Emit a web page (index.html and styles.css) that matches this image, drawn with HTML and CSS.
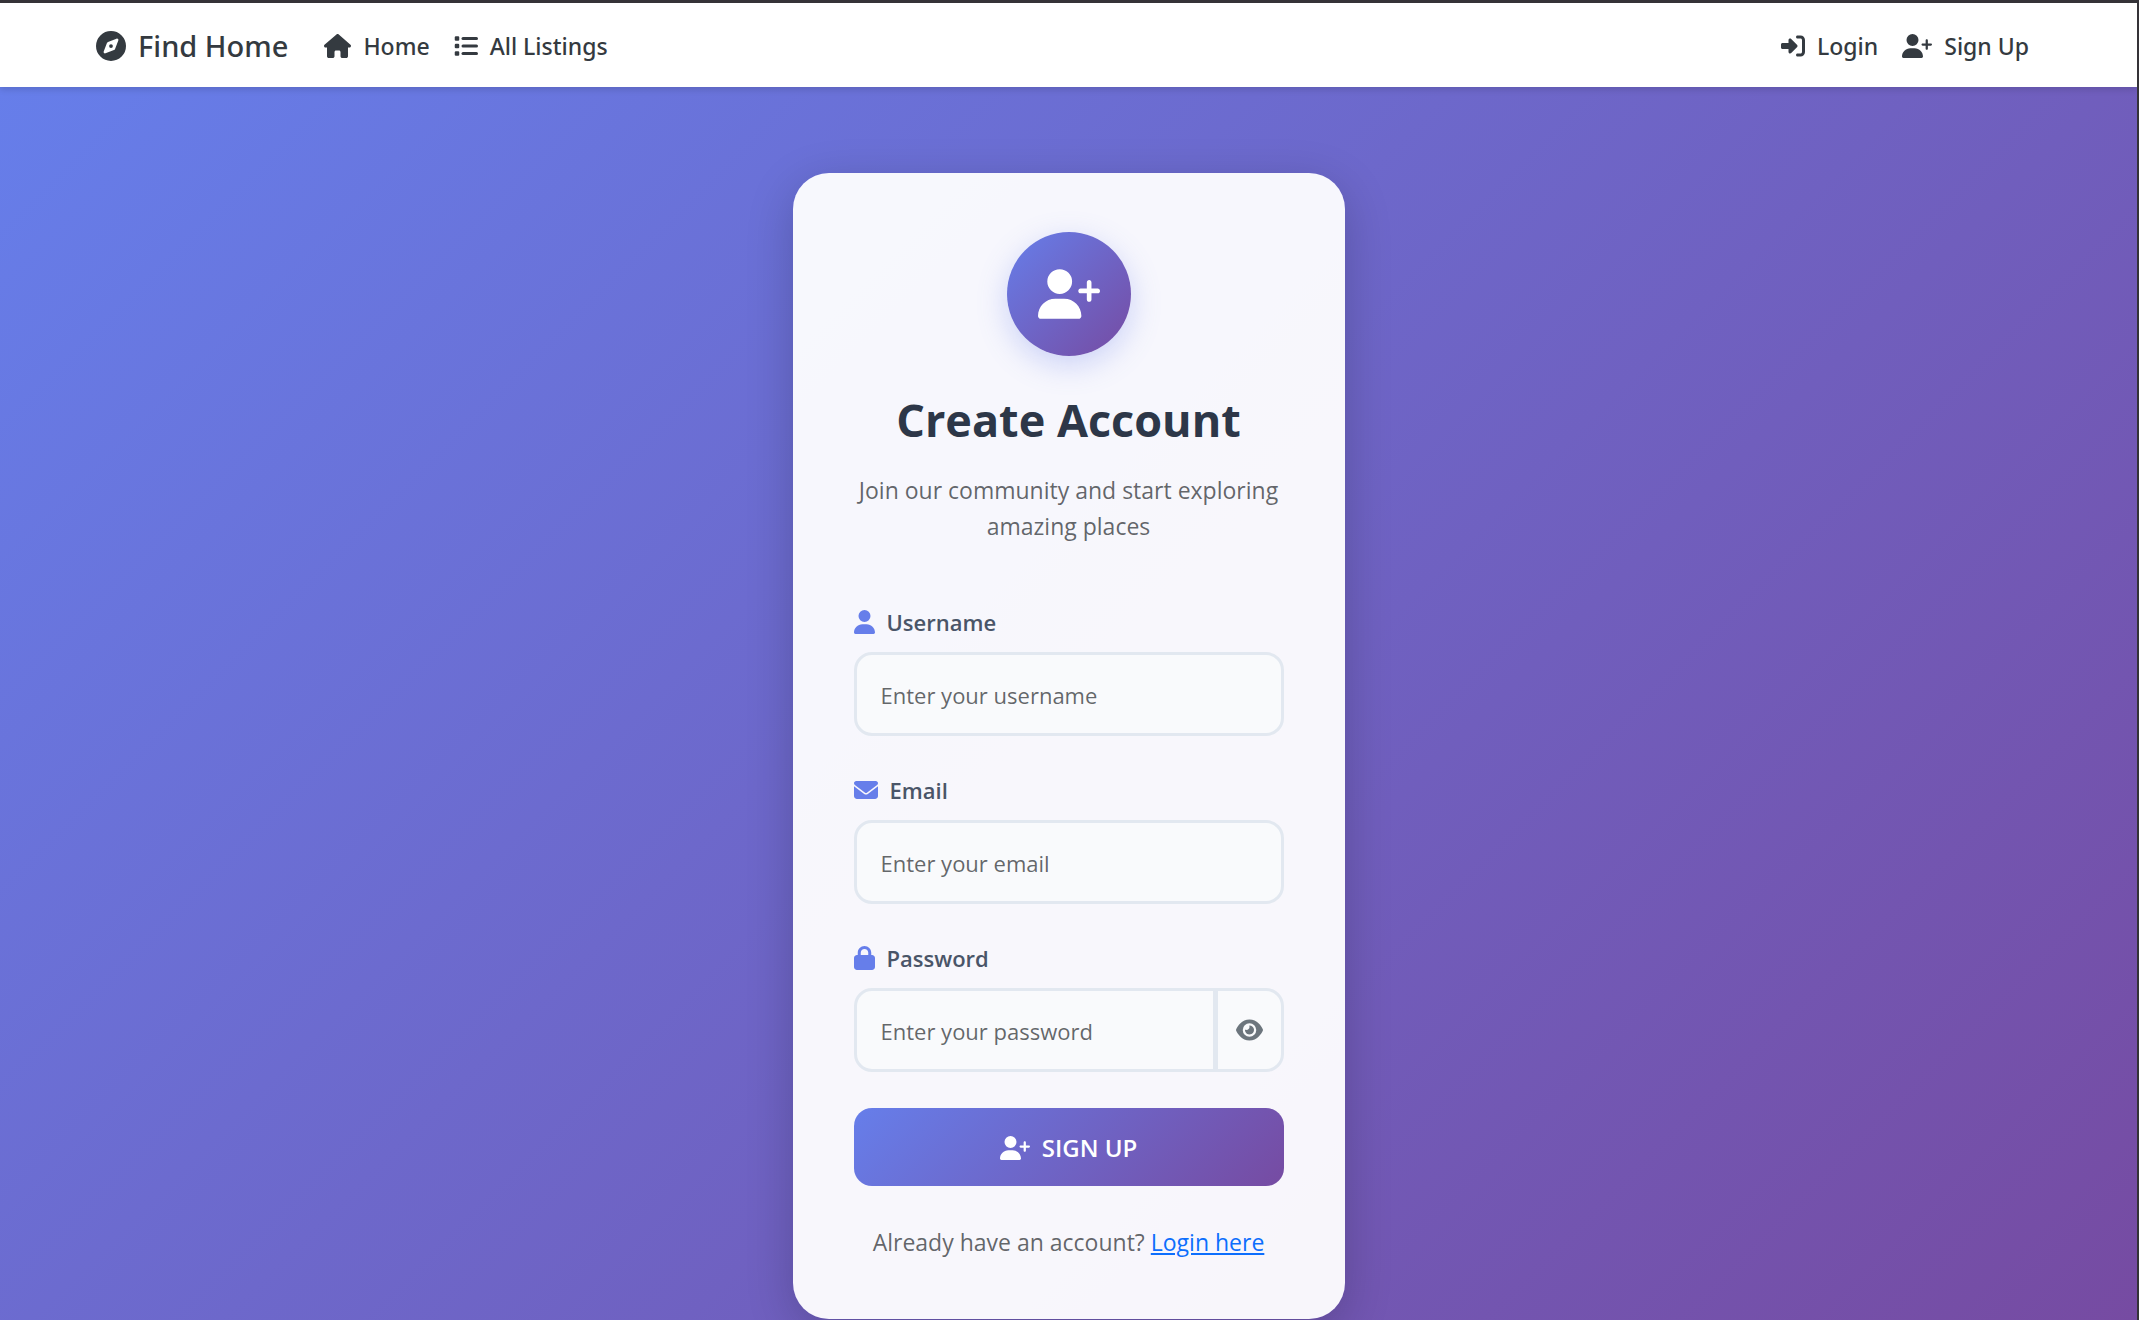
FILE: index.html
```html
<!DOCTYPE html>
<html lang="en">
<head>
<meta charset="utf-8">
<meta name="viewport" content="width=device-width, initial-scale=1">
<title>Sign Up | Find Home</title>
<link rel="stylesheet" href="styles.css">
</head>
<body>
<svg class="sprite" aria-hidden="true">
  <symbol id="i-compass" viewBox="0 0 512 512"><path d="M256 512A256 256 0 1 0 256 0a256 256 0 1 0 0 512zm50.7-186.9L162.4 380.6c-19.4 7.5-38.5-11.6-31-31l55.5-144.3c3.3-8.5 9.9-15.1 18.4-18.4l144.3-55.5c19.4-7.5 38.5 11.6 31 31L325.1 306.7c-3.2 8.5-9.9 15.1-18.4 18.4zM288 256a32 32 0 1 0 -64 0 32 32 0 1 0 64 0z"/></symbol>
  <symbol id="i-house" viewBox="0 0 576 512"><path d="M575.8 255.5c0 18-15 32.1-32 32.1h-32l.7 160.2c0 2.7-.2 5.4-.5 8.1V472c0 22.1-17.9 40-40 40H456c-1.1 0-2.2 0-3.3-.1c-1.4 .1-2.8 .1-4.2 .1H416 392c-22.1 0-40-17.9-40-40V448 384c0-17.7-14.3-32-32-32H256c-17.7 0-32 14.3-32 32v64 24c0 22.1-17.9 40-40 40H160 128.1c-1.5 0-3-.1-4.5-.2c-1.2 .1-2.4 .2-3.6 .2H104c-22.1 0-40-17.9-40-40V360c0-.9 0-1.9 .1-2.8V287.6H32c-18 0-32-14-32-32.1c0-9 3-17 10-24L266.4 8c7-7 15-8 22-8s15 2 21 7L564.8 231.5c8 7 12 15 11 24z"/></symbol>
  <symbol id="i-list" viewBox="0 0 512 512"><rect x="16" y="48" width="96" height="96" rx="24"/><rect x="16" y="208" width="96" height="96" rx="24"/><rect x="16" y="368" width="96" height="96" rx="24"/><rect x="160" y="64" width="352" height="64" rx="32"/><rect x="160" y="224" width="352" height="64" rx="32"/><rect x="160" y="384" width="352" height="64" rx="32"/></symbol>
  <symbol id="i-login" viewBox="0 0 512 512"><path d="M217.9 105.9L340.7 228.7c7.2 7.2 11.3 17.1 11.3 27.3s-4.1 20.1-11.3 27.3L217.9 406.1c-6.4 6.4-15 9.9-24 9.9c-18.7 0-33.9-15.2-33.9-33.9l0-62.1L32 320c-17.7 0-32-14.3-32-32l0-64c0-17.7 14.3-32 32-32l128 0 0-62.1c0-18.7 15.2-33.9 33.9-33.9c9 0 17.6 3.6 24 9.9zM352 416l64 0c17.7 0 32-14.3 32-32l0-256c0-17.7-14.3-32-32-32l-64 0c-17.7 0-32-14.3-32-32s14.3-32 32-32l64 0c53 0 96 43 96 96l0 256c0 53-43 96-96 96l-64 0c-17.7 0-32-14.3-32-32s14.3-32 32-32z"/></symbol>
  <symbol id="i-user-plus" viewBox="0 0 640 512"><path d="M96 128a128 128 0 1 1 256 0A128 128 0 1 1 96 128zM0 482.3C0 383.8 79.8 304 178.3 304h91.4C368.2 304 448 383.8 448 482.3c0 16.4-13.3 29.7-29.7 29.7H29.7C13.3 512 0 498.7 0 482.3zM504 312V248H440c-13.3 0-24-10.7-24-24s10.7-24 24-24h64V136c0-13.3 10.7-24 24-24s24 10.7 24 24v64h64c13.3 0 24 10.7 24 24s-10.7 24-24 24H552v64c0 13.3-10.7 24-24 24s-24-10.7-24-24z"/></symbol>
  <symbol id="i-user" viewBox="0 0 448 512"><path d="M224 256A128 128 0 1 0 224 0a128 128 0 1 0 0 256zm-45.7 48C79.8 304 0 383.8 0 482.3C0 498.7 13.3 512 29.7 512H418.3c16.4 0 29.7-13.3 29.7-29.7C448 383.8 368.2 304 269.7 304H178.3z"/></symbol>
  <symbol id="i-envelope" viewBox="0 0 512 512"><path d="M48 64C21.5 64 0 85.5 0 112c0 15.1 7.1 29.3 19.2 38.4L236.8 313.6c11.4 8.5 27 8.5 38.4 0L492.8 150.4c12.1-9.1 19.2-23.3 19.2-38.4c0-26.5-21.5-48-48-48H48zM0 176V384c0 35.3 28.7 64 64 64H448c35.3 0 64-28.7 64-64V176L294.4 339.2c-22.8 17.1-54 17.1-76.8 0L0 176z"/></symbol>
  <symbol id="i-lock" viewBox="0 0 448 512"><path d="M144 144v48H304V144c0-44.2-35.8-80-80-80s-80 35.8-80 80zM80 192V144C80 64.5 144.5 0 224 0s144 64.5 144 144v48h16c35.3 0 64 28.7 64 64V448c0 35.3-28.7 64-64 64H64c-35.3 0-64-28.7-64-64V256c0-35.3 28.7-64 64-64H80z"/></symbol>
  <symbol id="i-eye" viewBox="0 0 576 512"><path d="M288 32c-80.8 0-145.5 36.8-192.6 80.6C48.6 156 17.3 208 2.5 243.7c-3.3 7.9-3.3 16.7 0 24.6C17.3 304 48.6 356 95.4 399.4C142.5 443.2 207.2 480 288 480s145.5-36.8 192.6-80.6c46.8-43.5 78.1-95.4 93-131.1c3.3-7.9 3.3-16.7 0-24.6c-14.9-35.7-46.2-87.7-93-131.1C433.5 68.8 368.8 32 288 32zM144 256a144 144 0 1 1 288 0 144 144 0 1 1 -288 0zm144-64c0 35.3-28.7 64-64 64c-7.1 0-13.9-1.2-20.3-3.3c-5.5-1.8-11.9 1.6-11.7 7.4c.3 6.9 1.3 13.8 3.2 20.7c13.7 51.2 66.4 81.6 117.6 67.9s81.6-66.4 67.9-117.6c-11.1-41.5-47.8-69.4-88.6-71.1c-5.8-.2-9.2 6.1-7.4 11.7c2.1 6.4 3.3 13.2 3.3 20.3z"/></symbol>
</svg>

<header class="navbar">
  <a class="brand" href="#"><svg class="icon brand-icon"><use href="#i-compass"/></svg>Find Home</a>
  <nav class="nav-links">
    <a class="nav-link" href="#"><svg class="icon icon-eye"><use href="#i-house"/></svg>Home</a>
    <a class="nav-link" href="#"><svg class="icon"><use href="#i-list"/></svg>All Listings</a>
  </nav>
  <nav class="nav-links nav-account">
    <a class="nav-link" href="#"><svg class="icon"><use href="#i-login"/></svg>Login</a>
    <a class="nav-link" href="#"><svg class="icon icon-wide"><use href="#i-user-plus"/></svg>Sign Up</a>
  </nav>
</header>

<main class="page">
  <section class="card">
    <div class="badge"><svg class="badge-icon"><use href="#i-user-plus"/></svg></div>
    <h1 class="title">Create Account</h1>
    <p class="subtitle">Join our community and start exploring amazing places</p>
    <form class="form">
      <div class="field">
        <label class="label" for="username"><svg class="icon icon-narrow"><use href="#i-user"/></svg>Username</label>
        <input class="input" id="username" type="text" placeholder="Enter your username">
      </div>
      <div class="field">
        <label class="label" for="email"><svg class="icon"><use href="#i-envelope"/></svg>Email</label>
        <input class="input" id="email" type="email" placeholder="Enter your email">
      </div>
      <div class="field">
        <label class="label" for="password"><svg class="icon icon-narrow"><use href="#i-lock"/></svg>Password</label>
        <div class="input-group">
          <input class="input" id="password" type="password" placeholder="Enter your password">
          <button class="toggle" type="button" aria-label="Show password"><svg class="icon icon-eye"><use href="#i-eye"/></svg></button>
        </div>
      </div>
      <button class="submit" type="submit"><svg class="icon icon-wide"><use href="#i-user-plus"/></svg>SIGN UP</button>
    </form>
    <p class="footnote">Already have an account? <a href="#">Login here</a></p>
  </section>
</main>
</body>
</html>
```
FILE: styles.css
```css
*, *::before, *::after { box-sizing: border-box; }

body {
  margin: 0;
  min-height: 100vh;
  display: flex;
  flex-direction: column;
  border: solid #353338;
  border-width: 3px 2px 0 0;
  border-bottom: 1px solid #000;
  font-family: "Open Sans", "Noto Sans", sans-serif;
  font-size: 23px;
  line-height: 36px;
  color: #212529;
}

.sprite { display: none; }

.icon {
  width: 24px;
  height: 24px;
  flex: none;
  fill: currentColor;
}
.icon-narrow { width: 21px; }
.icon-eye { width: 27px; }
.icon-wide { width: 30px; }

.navbar {
  position: relative;
  z-index: 1;
  display: flex;
  align-items: center;
  height: 84px;
  padding: 2px 108px 0 96px;
  background: #fff;
  box-shadow: 0 3px 6px rgba(0, 0, 0, .12);
  font-family: "Noto Sans", "Open Sans", sans-serif;
}
.brand, .nav-link {
  display: flex;
  align-items: center;
  gap: 12px;
  color: #343a40;
  font-weight: 500;
  text-decoration: none;
}
.brand {
  margin-right: 36px;
  font-size: 29px;
}
.brand-icon { width: 30px; height: 30px; }
.nav-links { display: flex; gap: 24px; }
.nav-account { margin-left: auto; }

.page {
  flex: 1;
  display: flex;
  justify-content: center;
  align-items: flex-start;
  padding: 86px 24px 1px;
  background: linear-gradient(135deg, #667eea 0%, #764ba2 100%);
}

.card {
  width: 552px;
  padding: 59px 61px;
  border-radius: 36px;
  background: rgba(255, 255, 255, .95);
  box-shadow: 0 12px 48px rgba(0, 0, 0, .2);
  text-align: center;
}

.badge {
  display: flex;
  align-items: center;
  justify-content: center;
  width: 124px;
  height: 124px;
  margin: 0 auto 36px;
  border-radius: 50%;
  background: linear-gradient(135deg, #667eea, #764ba2);
  box-shadow: 0 9px 30px rgba(102, 126, 234, .3);
}
.badge-icon { width: 62px; height: 50px; fill: #fff; }

.title {
  margin: 0 0 24px;
  font-size: 45px;
  line-height: 56px;
  font-weight: 700;
  color: #2d3748;
}
.subtitle {
  margin: 0 0 60px;
  color: rgba(33, 37, 41, .7);
}

.form { display: flex; flex-direction: column; gap: 36px; }
.field { display: flex; flex-direction: column; gap: 12px; }
.label {
  display: flex;
  align-items: center;
  gap: 12px;
  color: #4a5568;
  font-size: 22px;
  font-weight: 600;
}
.label .icon { color: #667eea; }

.input {
  width: 100%;
  height: 84px;
  padding: 2px 24px 0;
  border: 3px solid #e2e8f0;
  border-radius: 18px;
  background: #f9fafc;
  color: #212529;
  font: inherit;
  font-size: 22px;
}
.input::placeholder { color: rgba(33, 37, 41, .7); opacity: 1; }

.input-group { display: flex; }
.input-group .input {
  flex: 1;
  min-width: 0;
  border-radius: 18px 0 0 18px;
}
.toggle {
  display: flex;
  align-items: center;
  justify-content: center;
  width: 68px;
  padding: 0;
  border: 3px solid #e2e8f0;
  border-left-width: 2px;
  border-radius: 0 18px 18px 0;
  background: #f9fafc;
  color: #6c757d;
}

.submit {
  display: flex;
  align-items: center;
  justify-content: center;
  gap: 12px;
  height: 78px;
  padding: 2px 0 0;
  border: 0;
  border-radius: 18px;
  background: linear-gradient(135deg, #667eea, #764ba2);
  color: #fff;
  font: inherit;
  font-size: 24px;
  font-weight: 600;
}

.footnote { margin: 38px 0 0; color: rgba(33, 37, 41, .7); }
.footnote a { color: #0d6efd; }
```
